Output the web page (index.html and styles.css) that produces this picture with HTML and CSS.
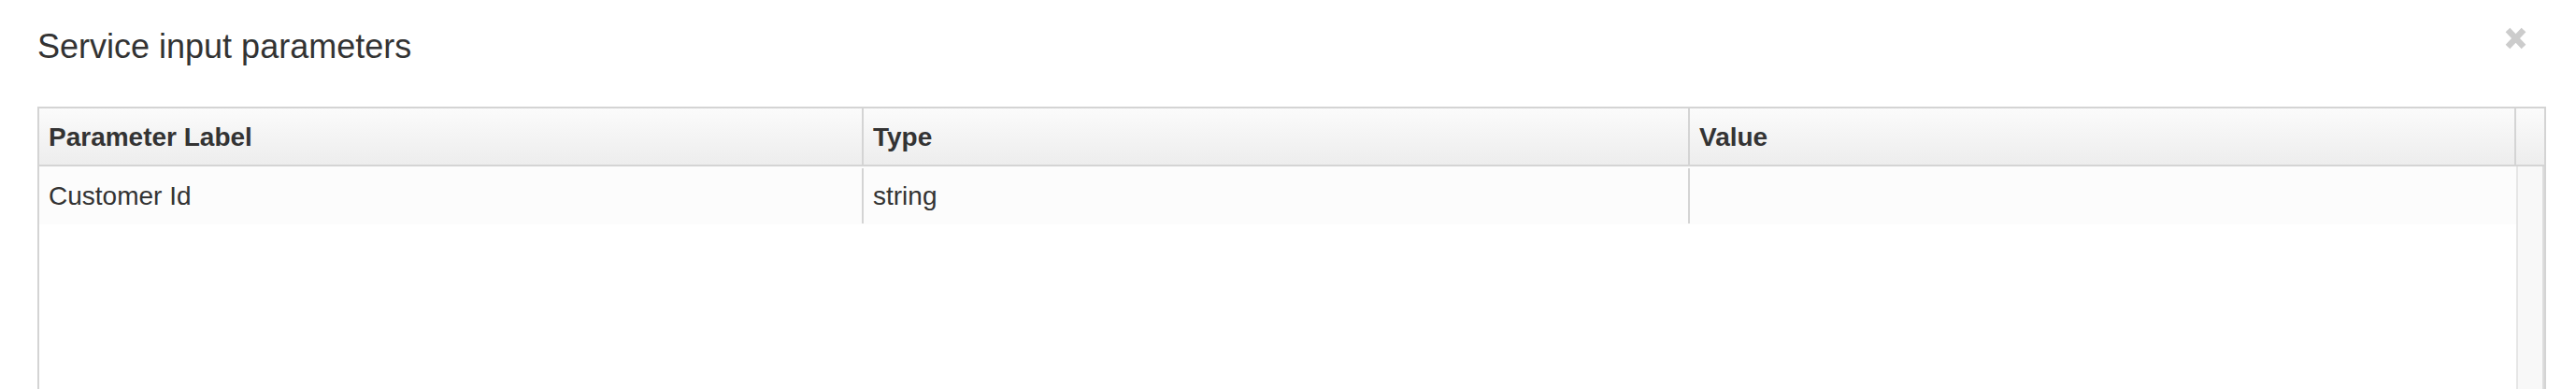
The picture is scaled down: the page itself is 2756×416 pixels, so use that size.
FILE: index.html
```html
<!doctype html>
<html lang="en">
  <head>
    <meta charset="UTF-8" />
    <title>Service input parameters</title>
    <link rel="stylesheet" href="styles.css">
  </head>
  <body>
    <div class="modal">
      <div class="modal-header">
        <h4 class="modal-title">Service input parameters</h4>
        <button class="close" type="button" aria-label="Close">
          <svg viewBox="0 0 23 24" width="23" height="24">
            <path d="M3 3 L20 21 M20 3 L3 21" stroke="currentColor" stroke-width="6.5" stroke-linecap="butt" />
          </svg>
        </button>
      </div>

      <div class="modal-body">
        <div class="grid">
          <div class="grid-header">
            <div class="header-cell">Parameter Label</div>
            <div class="header-cell">Type</div>
            <div class="header-cell">Value</div>
            <div class="header-cell spacer"></div>
          </div>

          <div class="grid-body">
            <div class="grid-rows">
              <div class="grid-row">
                <div class="cell">Customer Id</div>
                <div class="cell">string</div>
                <div class="cell last"></div>
              </div>
            </div>
            <div class="scrollbar"></div>
          </div>
        </div>
      </div>
    </div>
  </body>
</html>
```

FILE: styles.css
```css
* {
  margin: 0;
  padding: 0;
  box-sizing: border-box;
}

html,
body {
  height: 100%;
  background: #fff;
  color: #333;
  font-family: 'Liberation Sans', Arial, sans-serif;
  overflow: hidden;
}

.modal-header {
  display: flex;
  justify-content: space-between;
  align-items: flex-start;
  padding: 24px 53px 0 40px;
}

.modal-title {
  font-size: 36px;
  font-weight: normal;
  line-height: 51px;
}

.close {
  margin-top: 5px;
  border: 0;
  background: none;
  color: #cccccc;
  cursor: pointer;
  display: flex;
}

.modal-body {
  padding: 39px 32px 0 40px;
}

.grid {
  border: 2px solid #d4d4d4;
  border-bottom: 0;
  font-size: 28px;
}

.grid-header {
  display: grid;
  grid-template-columns: 882px 1fr 1fr 30px;
  background: linear-gradient(to bottom, #fbfbfb, #ededed);
  border-bottom: 2px solid #d4d4d4;
}

.header-cell {
  padding: 11px 10px 9px;
  line-height: 40px;
  font-weight: bold;
  border-right: 2px solid #d4d4d4;
}

.header-cell.spacer {
  border-right: 0;
}

.grid-body {
  display: flex;
  height: 260px;
}

.grid-rows {
  flex: 1;
}

.grid-row {
  display: grid;
  grid-template-columns: 882px 1fr 1fr;
  padding: 2px 0 1px;
  background: #fcfcfc;
}

.cell {
  padding: 10px 10px 9px;
  line-height: 40px;
  border-right: 2px solid #d4d4d4;
}

.cell.last {
  border-right-color: transparent;
}

.scrollbar {
  width: 30px;
  background: #f8f8f8;
  border-left: 2px solid #e6e6e6;
  border-right: 2px solid #dcdcdc;
}
```
